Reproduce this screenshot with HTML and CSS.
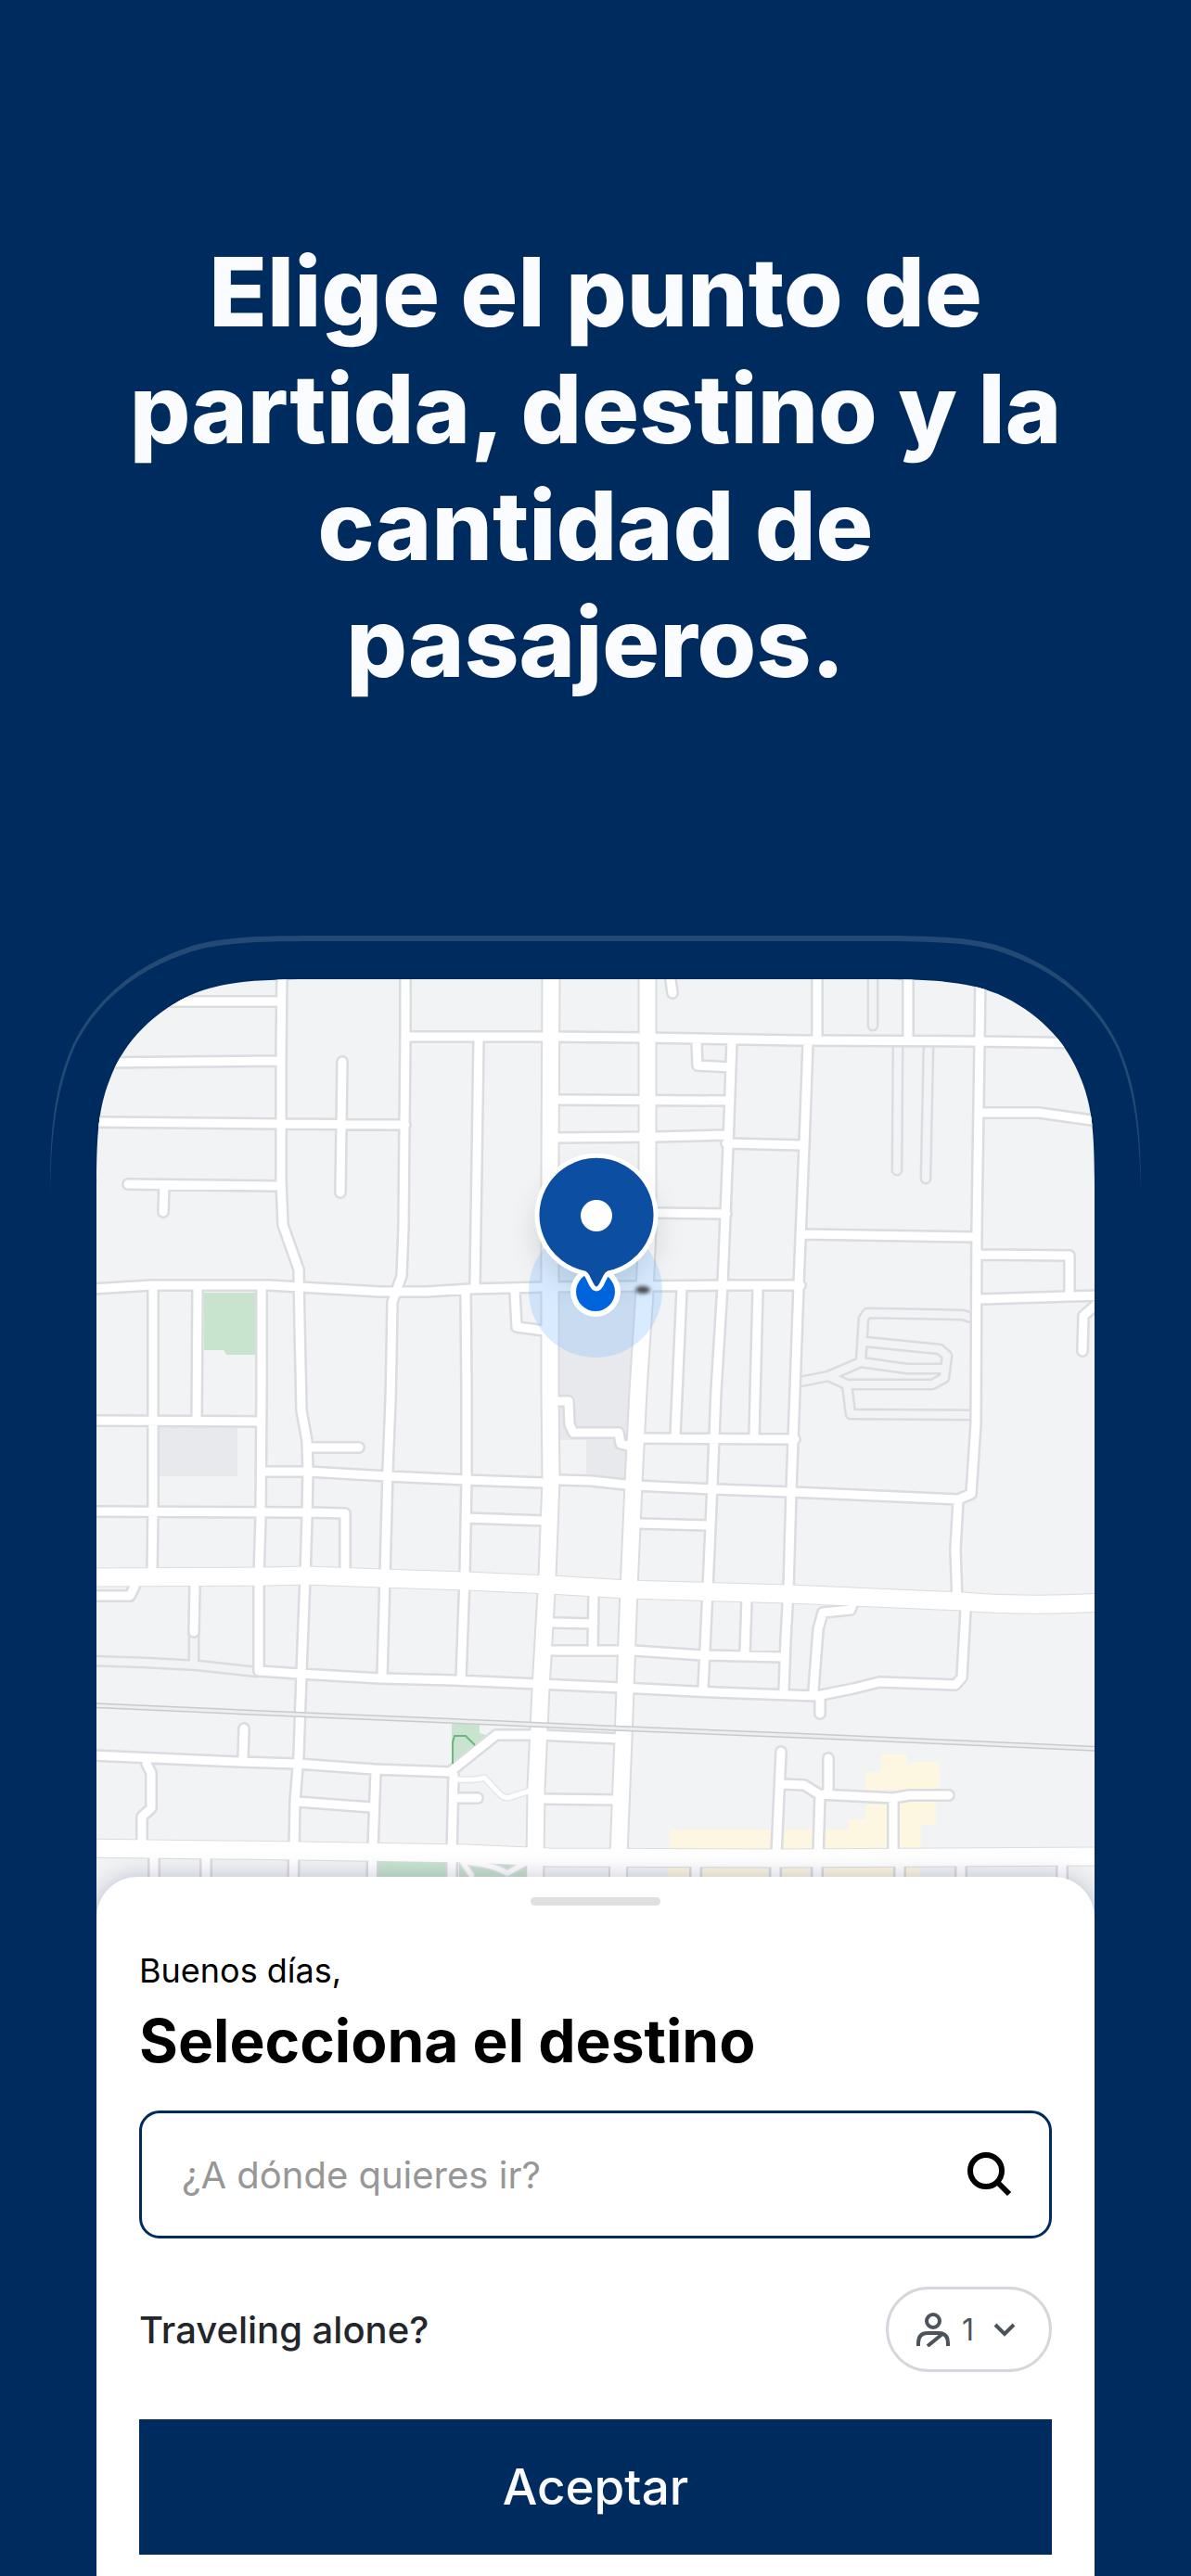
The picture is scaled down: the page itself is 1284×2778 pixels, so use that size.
FILE: index.html
```html
<!DOCTYPE html>
<html lang="es">
<head>
    <meta charset="UTF-8">
    <meta name="viewport" content="width=device-width, initial-scale=1.0">
    <title>Selecciona el destino</title>
    <link rel="stylesheet" href="styles.css">
</head>
<body>
    <header class="hero">
        <h1>Elige el punto de partida, destino y la cantidad de pasajeros.</h1>
    </header>

    <main class="phone">
        <svg class="map" viewBox="0 1008 1284 1072" role="img" aria-label="Mapa con tu ubicación">
            <defs>
                <clipPath id="screen">
                    <path d="M104 2080V1290C104 1230 105 1198 118 1165C135 1120 168 1090 208 1072C245 1057 285 1056 350 1056H934C999 1056 1039 1057 1076 1072C1116 1090 1149 1120 1166 1165C1179 1198 1180 1230 1180 1290V2080Z"/>
                </clipPath>
                <filter id="soft" x="-50%" y="-50%" width="200%" height="200%">
                    <feGaussianBlur stdDeviation="14"/>
                </filter>
                <filter id="smudge" x="-100%" y="-100%" width="300%" height="300%">
                    <feGaussianBlur stdDeviation="2"/>
                </filter>

                <!-- streets -->
                <path id="streets" d="
                    M304 1050L303 1138L303 1273L305 1321L322 1369L323 1428L325 1521L331 1554L332 1586L331 1636L329 1700L325 1804L322 1893L318 1943L317 1993L315 2080
                    M100 1080H303 M100 1146L300 1144 M100 1210L303 1212L437 1213
                    M138 1277L300 1279 M177 1279L176 1307 M369 1145L367 1286
                    M437 1050V1118L436 1214L435 1324L433 1376L423 1404L422 1462L421 1510L418 1586L415 1700L412 1808
                    M100 1390L163 1386H290L323 1388L410 1393H460L507 1390L587 1388L790 1386H863
                    M165 1390L165 1500V1625L164 1695 M213 1390L212 1533
                    M282 1390L282 1500L281 1636L279 1700V1802L323 1805L410 1810L490 1812L580 1816L670 1820L770 1825L880 1829L920 1821L948 1814L1030 1817L1037 1809L1041 1736
                    M100 1532L280 1533 M283 1587H332L418 1592L503 1596L587 1599 M603 1596L637 1597L683 1602L770 1606L853 1609L1033 1617L1047 1611L1052 1536L1053 1324L1056 1125L1057 1050
                    M335 1561H387 M100 1630L332 1631L372 1632V1695
                    M210 1710L209 1760 M100 1721H140L145 1711
                    M263 1864L262 1896 M100 1893L257 1900L320 1902L403 1908L485 1911L535 1871H580L667 1875
                    M158 1902L163 1912V1950L153 1959V1993 M320 1943L400 1949 M405 1911L402 1993L400 2080
                    M489 1914L487 2000V2080 M166 1996V2080 M222 1996V2080 M750 2004V2080 M836 2004V2080
                    M881 2004V2080 M970 2004V2080 M1036 2004V2080 M1145 2004V2080
                    M842 1889L837 2000 M843 1924L867 1925L883 1935L963 1939L980 1936H1023 M893 1896V1934
                    M884 1936L882 2000 M963 1939V2000 M884 1830V1848
                    M877 1823L882 1757L887 1739L917 1736L919 1730
                    M1032 1728L1030 1671L1033 1618
                    M881 1050V1121 M979 1050V1121 M871 1125L867 1235L861 1386L857 1500L853 1607L850 1714L847 1768L845 1823
                    M440 1118H587L697 1119L860 1122L1053 1123L1180 1125
                    M867 1331L1053 1334 M1058 1200H1120L1184 1209
                    M1055 1353L1153 1354V1397 M1058 1401L1153 1398L1184 1397 M1184 1405L1168 1419L1167 1457
                    M516 1121L514 1256L512 1386 M502 1393L503 1500V1596L501 1700L497 1811
                    M600 1186L787 1187 M600 1227L707 1226L783 1224 M707 1308L783 1309 M783 1233L865 1235
                    M789 1121L785 1235L779 1386L772 1500L768 1600L763 1714L758 1821
                    M751 1125L752 1149L787 1151 M722 1050L725 1071
                    M555 1393L557 1431L587 1435 M735 1390L728 1548 M817 1390L813 1548 M690 1551L857 1552
                    M603 1511H613L614 1536L618 1545H667L669 1557L678 1559
                    M503 1637L587 1640 M690 1643L763 1645 M597 1750L640 1751 M640 1718L639 1779 M593 1780H670 M683 1780L757 1785L843 1787
                    M805 1725L803 1784 M585 1940L663 1941 M495 1939H515"/>

                <!-- unpaved lanes, filled like the land around them -->
                <path id="lanes" d="
                    M941 1050V1106 M968 1128L967 1262 M1001 1128L998 1271
                    M1050 1422L1038 1418L935 1416L931 1422L928 1469L893 1484L863 1490
                    M933 1447L1013 1455L1021 1462L1018 1486L1005 1493H913L893 1484
                    M928 1469L978 1476H1018 M913 1493L917 1525L1047 1526
                    M209 1760L209 1793 M100 1791L157 1793L213 1796L277 1803"/>

                <path id="avenues" d="
                    M594 1050L593 1255V1500L594 1596L590 1700L583 1821L578 1929L576 2080
                    M698 1050V1324L695 1393L688 1500L683 1600L678 1714L672 1875L667 2000L665 2080"/>
                <path id="boulevards" d="
                    M90 1701L290 1700L330 1699L410 1702L503 1705L593 1709L677 1714L850 1719L1037 1727Q1110 1733 1190 1728
                    M90 1993L323 1996L503 1999L593 2003L837 2004L1190 2002"/>
                <path id="footpath" d="M495 1919Q515 1920 522 1917L540 1936Q545 1940 550 1938L572 1931M496 2004L508 2022M500 2008Q530 2010 547 2020L572 2006"/>
                <path id="railway" d="M100 1839L323 1849L490 1856L670 1864L870 1872L1030 1879L1184 1886"/>
            </defs>

            <!-- glow line over the phone -->
            <path class="ring" d="M54 1290C54 1230 56 1178 78 1128C99 1083 142 1041 207 1020C245 1009 290 1009 360 1009H924C994 1009 1039 1009 1077 1020C1142 1041 1185 1083 1206 1128C1228 1178 1230 1230 1230 1290C1229 1235 1226 1182 1204 1130C1182 1085 1142 1047 1077 1026C1039 1015 994 1015 924 1015H360C290 1015 245 1015 207 1026C142 1047 102 1085 80 1130C58 1182 55 1235 54 1290Z"/>

            <g clip-path="url(#screen)">
                <rect class="land" x="100" y="1050" width="1084" height="1030"/>

                <path class="block" d="M172 1539H256V1592H172ZM602 1393H694L675 1598L632 1591V1553H602Z"/>
                <path class="park" d="M220 1394H276V1461H244L241 1456H220ZM487 1859H517V1869L527 1872L490 1903H487ZM408 2007H483V2080H408ZM495 2007H567V2080H495Z"/>
                <path class="shops" d="M722 1973H876V1994H722ZM890 1973H915V1962H933V1946H956V1994H890ZM970 1943H1009V1968H993V1994H970ZM933 1911H950V1892H978V1906L983 1900H1011V1907H1013V1930H933ZM720 2012H743V2080H720ZM758 2012H828V2080H758ZM843 2012H873V2080H843ZM887 2012H963V2080H887ZM977 2012H992V2080H977Z"/>

                <use href="#lanes" class="lane-edge"/>
                <use href="#lanes" class="lane"/>
                <use href="#streets" class="street-edge"/>
                <use href="#avenues" class="avenue-edge"/>
                <use href="#boulevards" class="boulevard-edge"/>
                <use href="#footpath" class="footpath-edge"/>
                <use href="#streets" class="street"/>
                <use href="#avenues" class="avenue"/>
                <use href="#boulevards" class="boulevard"/>
                <use href="#footpath" class="footpath"/>
                <use href="#railway" class="rail-edge"/>
                <use href="#railway" class="rail"/>
                <path class="trail" d="M488 1902V1879L490 1872H502L512 1882"/>

                <!-- user position -->
                <circle class="pin-shadow" cx="643" cy="1328" r="66" filter="url(#soft)"/>
                <circle class="halo" cx="642" cy="1392" r="72"/>
                <ellipse class="smudge" cx="693" cy="1391" rx="8" ry="4" filter="url(#smudge)"/>
                <circle class="white" cx="642" cy="1393" r="27"/>
                <circle class="dot" cx="642" cy="1393" r="21"/>
                <path class="pin" d="M630 1373A64 64 0 1 1 656 1373Q654 1374 653 1376L648 1386Q643 1394 638 1386L633 1376Q632 1374 630 1373Z"/>
                <circle class="white" cx="643" cy="1311" r="17"/>

                <rect class="sheet-shadow" x="104" y="2026" width="1076" height="110" rx="44" filter="url(#soft)"/>
            </g>
        </svg>

        <form class="sheet">
            <div class="handle"></div>
            <p class="greeting">Buenos días,</p>
            <h2>Selecciona el destino</h2>

            <div class="search">
                <input type="text" id="destination" placeholder="¿A dónde quieres ir?" aria-label="¿A dónde quieres ir?">
                <button type="button" class="search-btn" aria-label="Buscar">
                    <svg viewBox="0 0 48 48" width="48" height="48">
                        <circle cx="20" cy="20" r="17"/>
                        <path d="M32 32L45 45"/>
                    </svg>
                </button>
            </div>

            <div class="travel-row">
                <label for="passengers">Traveling alone?</label>
                <div class="passengers">
                    <svg class="person" viewBox="0 0 36 38" width="36" height="38">
                        <circle cx="18" cy="10" r="7"/>
                        <path d="M2 37V34Q2 23 12 23H24Q34 23 34 34V37M28 24L12 37"/>
                    </svg>
                    <select id="passengers">
                        <option>1</option>
                        <option>2</option>
                        <option>3</option>
                        <option>4</option>
                    </select>
                    <svg class="chevron" viewBox="0 0 24 16" width="24" height="16">
                        <path d="M2 3L12 13L22 3"/>
                    </svg>
                </div>
            </div>

            <button type="submit" class="accept-btn">Aceptar</button>
        </form>
    </main>
</body>
</html>
```
FILE: styles.css
```css
* {
    margin: 0;
    padding: 0;
    box-sizing: border-box;
    font-family: Inter, "Liberation Sans", sans-serif;
}

body {
    min-height: 100vh;
    display: flex;
    flex-direction: column;
    background-color: #002b5e;
}

.hero {
    padding: 252px 8% 252px;
    text-align: center;
}

.hero h1 {
    font-size: 103px;
    line-height: 126px;
    font-weight: 800;
    color: #fbfcff;
}

.phone {
    flex: 1;
    display: flex;
    flex-direction: column;
}

/* map */
.map {
    display: block;
    width: 100%;
    height: auto;
}

.map use {
    fill: none;
    stroke-linecap: round;
    stroke-linejoin: round;
}

.ring { fill: #234a75; }
.land { fill: #f1f3f5; }
.block { fill: #e8e9ed; }
.park { fill: #c8e3ce; }
.shops { fill: #fdf6e0; }

.lane-edge { stroke: #dadce1; stroke-width: 13px; }
.lane { stroke: #f1f3f5; stroke-width: 8px; }
.street-edge { stroke: #dadce0; stroke-width: 14px; }
.street { stroke: #fff; stroke-width: 9px; }
.avenue-edge { stroke: #dadce0; stroke-width: 21px; }
.avenue { stroke: #fff; stroke-width: 17px; }
.boulevard-edge { stroke: #dadce0; stroke-width: 21px; }
.boulevard { stroke: #fff; stroke-width: 19px; }
.footpath-edge { stroke: #e4e6e9; stroke-width: 8px; }
.footpath { stroke: #fff; stroke-width: 5px; }
.rail-edge { stroke: #c9cacd; stroke-width: 6px; }
.rail { stroke: #eceef0; stroke-width: 3px; }

.trail {
    fill: none;
    stroke: #6cb87a;
    stroke-width: 2px;
}

.halo { fill: #66b2ff; fill-opacity: 0.25; }
.white { fill: #fff; }
.dot { fill: #0065dd; }
.smudge { fill: #42474d; }
.pin-shadow { fill: #000; fill-opacity: 0.12; }
.sheet-shadow { fill: #1b1b45; fill-opacity: 0.25; }

.pin {
    fill: #0b4ea2;
    stroke: #fff;
    stroke-width: 5px;
}

/* bottom sheet */
.sheet {
    position: relative;
    flex: 1;
    margin: -56px 104px 0;
    padding: 22px 46px 23px;
    background-color: #fff;
    border-radius: 44px 44px 0 0;
}

.handle {
    width: 140px;
    height: 9px;
    margin: 0 auto;
    border-radius: 5px;
    background-color: #e0e0e0;
}

.greeting {
    margin-top: 46px;
    font-size: 36px;
    line-height: 48px;
    color: #000;
}

.sheet h2 {
    margin-top: 12px;
    font-size: 64px;
    line-height: 80px;
    font-weight: 700;
    color: #000;
}

.search {
    display: flex;
    align-items: center;
    height: 138px;
    margin-top: 35px;
    padding: 0 40px 0 43px;
    border: 3px solid #002b5e;
    border-radius: 22px;
}

.search input {
    flex: 1;
    min-width: 0;
    border: none;
    outline: none;
    background: none;
    font-size: 40px;
    color: #000;
}

.search input::placeholder {
    color: #979797;
    opacity: 1;
}

.search-btn {
    width: 48px;
    height: 48px;
    border: none;
    background: none;
    cursor: pointer;
}

.search-btn svg {
    display: block;
    fill: none;
    stroke: #000;
    stroke-width: 6px;
}

.travel-row {
    display: flex;
    justify-content: space-between;
    align-items: center;
    margin-top: 52px;
}

.travel-row label {
    font-size: 40px;
    font-weight: 500;
    color: #23262b;
}

.passengers {
    display: flex;
    align-items: center;
    width: 179px;
    height: 92px;
    padding-left: 30px;
    border: 3px solid #d5d7dc;
    border-radius: 46px;
}

.passengers svg {
    fill: none;
    stroke: #4d535b;
    stroke-width: 4px;
}

.passengers select {
    width: 34px;
    margin-left: 13px;
    border: none;
    outline: none;
    appearance: none;
    background: none;
    font-size: 32px;
    color: #4d535b;
}

.accept-btn {
    display: block;
    width: 100%;
    height: 146px;
    margin-top: 51px;
    border: none;
    background-color: #002b5e;
    color: #fafbfe;
    font-size: 53px;
    font-weight: 500;
    cursor: pointer;
}
```
